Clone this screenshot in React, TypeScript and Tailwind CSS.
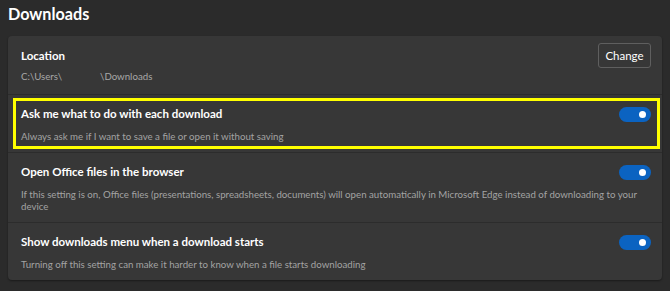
import type { ReactNode } from 'react';

function Toggle() {
  return (
    <div className="flex h-[15px] w-[32px] shrink-0 items-center justify-end rounded-full bg-[#0b63c1] pr-[5px]">
      <div className="h-[7px] w-[7px] rounded-full bg-white" />
    </div>
  );
}

interface RowProps {
  title: string;
  children: ReactNode;
  highlight?: boolean;
}

function SettingRow({ title, children, highlight }: RowProps) {
  return (
    <div className="relative pt-[11px] pr-[11px] pb-[10px] pl-[13px]">
      <div className="flex h-[16px] items-center justify-between">
        <div className="text-[11.5px] leading-[16px] font-bold text-white">{title}</div>
        <Toggle />
      </div>
      <div className="mt-[8px] text-[9.7px] leading-[12px] text-[#a3a3a3]">{children}</div>
      {highlight && (
        <div className="pointer-events-none absolute top-[3px] right-[2px] bottom-[3px] left-[5px] border-[3px] border-[#ffff00]" />
      )}
    </div>
  );
}

export default function App() {
  return (
    <div
      className="h-[291px] w-[670px] overflow-hidden bg-[#2b2b2b] px-[8px]"
      style={{ fontFamily: '"Segoe UI", Lato, "Open Sans", sans-serif' }}
    >
      <h1 className="pt-[2px] text-[16.2px] leading-[24px] font-bold text-white">Downloads</h1>

      <div className="mt-[10px] rounded-[4px] bg-[#373737] shadow-[0_1px_2px_rgba(0,0,0,0.4)]">
        {/* Location */}
        <div className="flex items-start justify-between pt-[7px] pr-[11px] pb-[12px] pl-[13px]">
          <div className="pt-[5px]">
            <div className="text-[11.5px] leading-[16px] font-bold text-white">Location</div>
            <div className="mt-[6px] flex text-[9.7px] leading-[12px] text-[#a8a8a8]">
              <span className="w-[79px]">C:\Users\</span>
              <span>\Downloads</span>
            </div>
          </div>
          <button className="h-[25px] w-[53px] rounded-[3px] border border-[#5f5f5f] bg-[#373737] text-[11.5px] text-white">
            Change
          </button>
        </div>

        <div className="h-px bg-[#2c2c2c]" />
        <SettingRow title="Ask me what to do with each download" highlight>
          Always ask me if I want to save a file or open it without saving
        </SettingRow>

        <div className="h-px bg-[#2c2c2c]" />
        <SettingRow title="Open Office files in the browser">
          If this setting is on, Office files (presentations, spreadsheets, documents) will open automatically in
          Microsoft Edge instead of downloading to your device
        </SettingRow>

        <div className="h-px bg-[#2c2c2c]" />
        <SettingRow title="Show downloads menu when a download starts">
          Turning off this setting can make it harder to know when a file starts downloading
        </SettingRow>
      </div>
    </div>
  );
}
